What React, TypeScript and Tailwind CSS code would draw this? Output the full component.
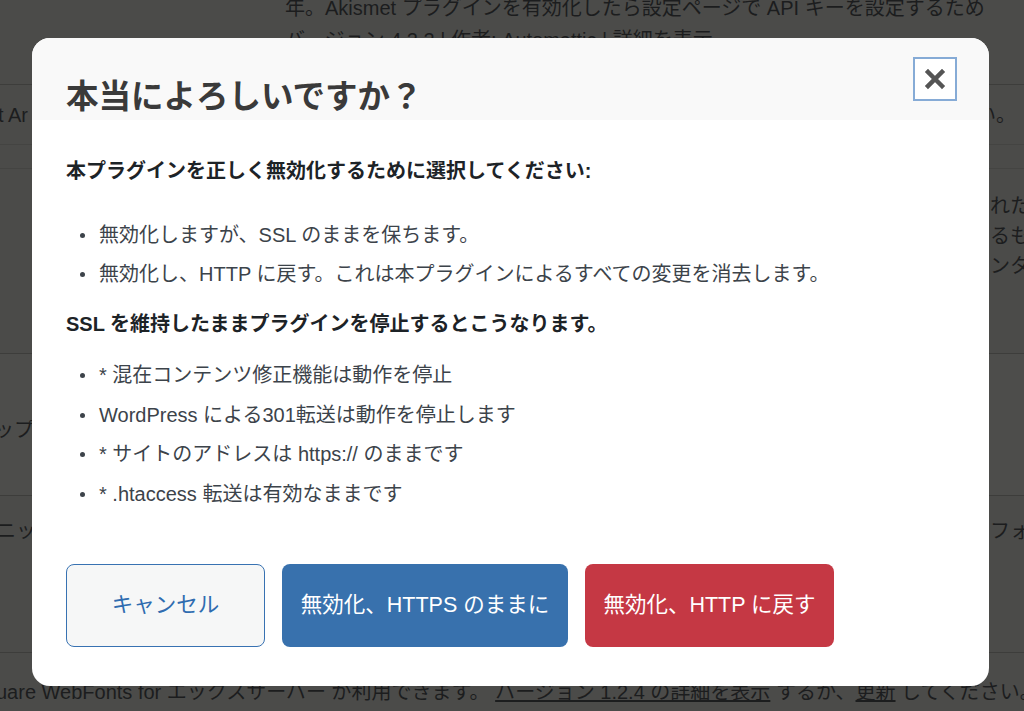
import { ReactNode } from "react";

const font = { fontFamily: '"Liberation Sans", "Noto Sans CJK JP", sans-serif' };

function Bullet({ children }: { children: ReactNode }) {
  return (
    <li className="flex items-center leading-[29px]">
      <span className="flex w-[33px] shrink-0">
        <span className="ml-[14px] h-[5px] w-[5px] rounded-full bg-[#3c434a]" />
      </span>
      <span>{children}</span>
    </li>
  );
}

export default function App() {
  return (
    <div
      className="relative h-[711px] w-[1024px] overflow-hidden bg-[#4b4b49] text-[20px] text-[#1c1d1e]"
      style={font}
    >
      {/* dimmed plugin list behind the dialog */}
      <div className="flex flex-col">
        <div className="h-[84px] pl-[285px] leading-[30px] whitespace-nowrap">
          <div className="-mt-[7px]">
            年。Akismet プラグインを有効化したら設定ページで API キーを設定するため
          </div>
          <div className="mt-[2px]">バージョン 4.2.2 | 作者: Automattic | 詳細を表示</div>
        </div>
        <div className="flex h-[60px] items-center justify-between border-t border-[#3d3d3b] whitespace-nowrap">
          <span className="-ml-[2px]">t Ar</span>
          <span className="mr-[8px]">い。</span>
        </div>
        <div className="h-[24px] border-t border-[#444442]" />
        <div className="flex h-[185px] flex-col items-end border-t border-[#444442] pt-[22px] leading-[30px]">
          <span className="w-[34px] overflow-hidden whitespace-nowrap">れた</span>
          <span className="w-[34px] overflow-hidden whitespace-nowrap">るも</span>
          <span className="w-[34px] overflow-hidden whitespace-nowrap">ンタ</span>
        </div>
        <div className="flex h-[142px] items-center border-t border-[#3d3d3b] bg-[#4d4d4b]">
          <span className="-ml-[6px] mt-[10px]">ップ</span>
        </div>
        <div className="flex h-[157px] items-start justify-between border-t border-[#3d3d3b] pt-[20px]">
          <span className="-ml-[4px]">ニッ</span>
          <span className="w-[34px] overflow-hidden whitespace-nowrap">フォ</span>
        </div>
        <div className="h-[60px] border-t border-[#3d3d3b] pt-[24px] whitespace-nowrap">
          <span className="-ml-[4px]">uare WebFonts for エックスサーバー が利用できます。</span>{" "}
          <span className="underline">バージョン 1.2.4 の詳細を表示</span> するか、
          <span className="underline">更新</span> してください。
        </div>
      </div>

      {/* dialog */}
      <div className="absolute left-[32px] top-[38px] w-[957px] overflow-hidden rounded-[18px] bg-white">
        <div className="relative h-[82px] bg-[#f9f9f9] pl-[34px] pt-[41px]">
          <h1 className="text-[32.5px] font-bold leading-[36px] text-[#3a3a3a]">
            本当によろしいですか？
          </h1>
          <button className="absolute right-[32px] top-[19px] flex h-[44px] w-[44px] items-center justify-center border-2 border-[#86abd6] bg-white">
            <svg width="22" height="22" viewBox="0 0 22 22">
              <path
                d="M4 4 L18 18 M18 4 L4 18"
                stroke="#555"
                strokeWidth="4.5"
                strokeLinecap="square"
              />
            </svg>
          </button>
        </div>

        <div className="px-[34px] pt-[37px] pb-[39px] text-[20px] text-[#3c434a]">
          <p className="font-bold leading-[29px] text-[#1d2327]">
            本プラグインを正しく無効化するために選択してください:
          </p>
          <ul className="mt-[35px] flex flex-col gap-[10px]">
            <Bullet>無効化しますが、SSL のままを保ちます。</Bullet>
            <Bullet>無効化し、HTTP に戻す。これは本プラグインによるすべての変更を消去します。</Bullet>
          </ul>
          <p className="mt-[21px] font-bold leading-[29px] text-[#1d2327]">
            SSL を維持したままプラグインを停止するとこうなります。
          </p>
          <ul className="mt-[22px] flex flex-col gap-[10.5px]">
            <Bullet>* 混在コンテンツ修正機能は動作を停止</Bullet>
            <Bullet>WordPress による301転送は動作を停止します</Bullet>
            <Bullet>* サイトのアドレスは https:// のままです</Bullet>
            <Bullet>* .htaccess 転送は有効なままです</Bullet>
          </ul>

          <div className="mt-[55px] flex gap-[17px] text-[21.5px]">
            <button className="flex h-[83px] w-[199px] items-center justify-center rounded-[8px] border-[1.5px] border-[#3872b2] bg-[#f6f7f7] text-[#2f6cb0]">
              キャンセル
            </button>
            <button className="flex h-[83px] w-[286px] items-center justify-center rounded-[8px] bg-[#3871ad] text-white">
              無効化、HTTPS のままに
            </button>
            <button className="flex h-[83px] w-[249px] items-center justify-center rounded-[8px] bg-[#c53844] text-white">
              無効化、HTTP に戻す
            </button>
          </div>
        </div>
      </div>
    </div>
  );
}
